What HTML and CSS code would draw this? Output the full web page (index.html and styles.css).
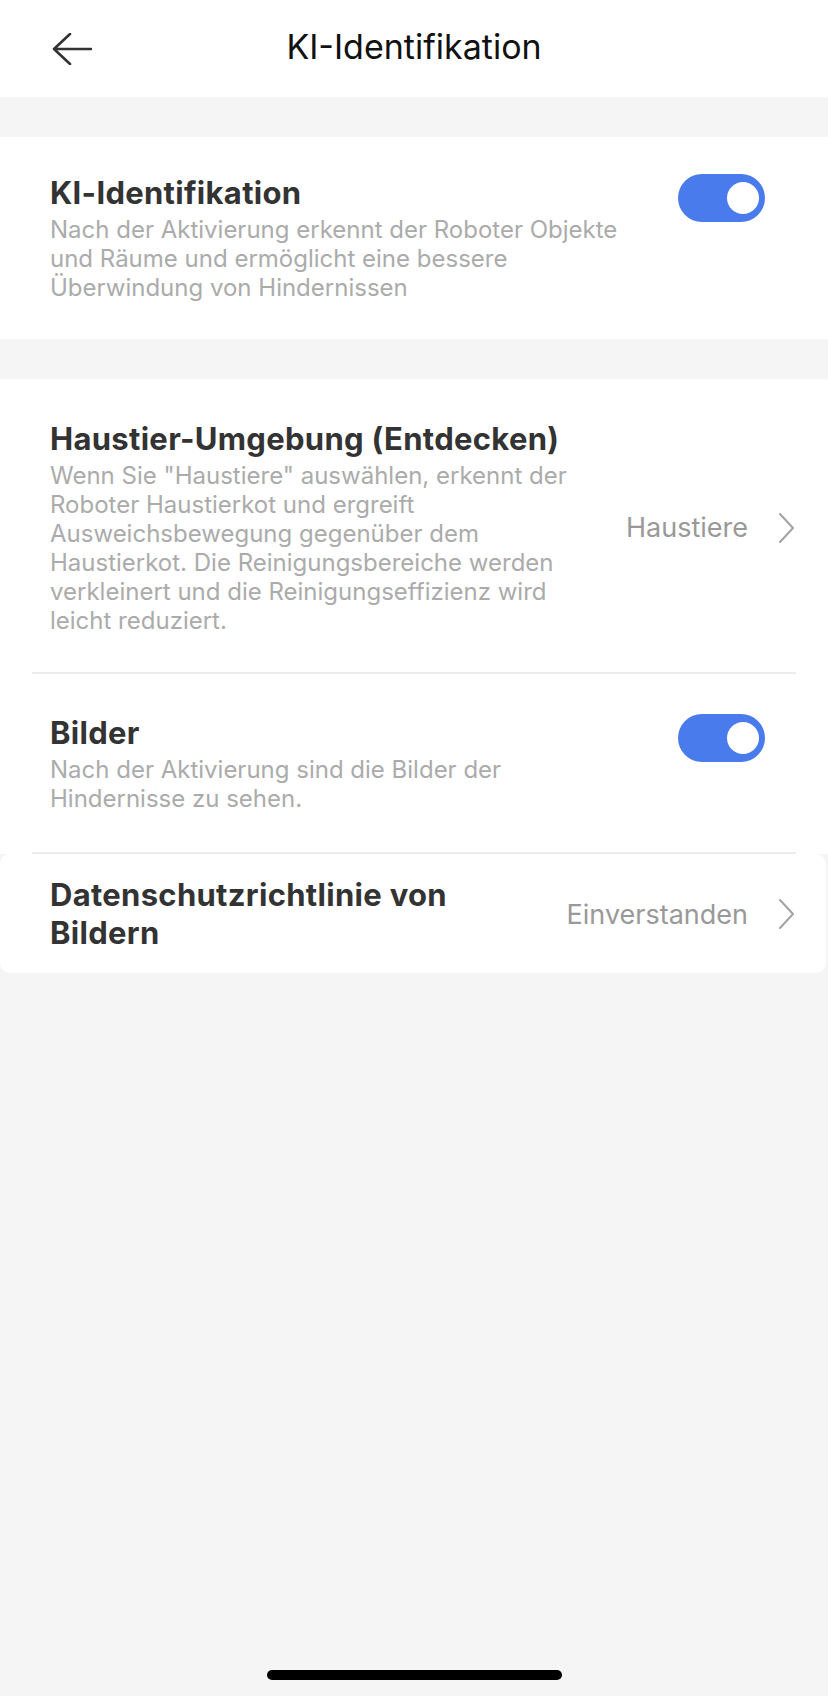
FILE: index.html
```html
<!DOCTYPE html>
<html lang="de">
<head>
    <meta charset="UTF-8">
    <title>KI-Identifikation</title>
    <link rel="stylesheet" href="styles.css">
</head>
<body>
<div class="screen">

<header class="topbar">
    <button class="back" aria-label="Zurück">
        <svg width="40" height="32" viewBox="0 0 40 32">
            <path d="M18 1 L2 16 L18 31 M2 16 H39" fill="none" stroke="#333" stroke-width="2.6" stroke-linecap="round" stroke-linejoin="round"/>
        </svg>
    </button>
    <h1 class="page-title">KI-Identifikation</h1>
    <span></span>
</header>

<section class="card">
    <div class="row row-first">
        <div class="row-text">
            <div class="row-title">KI-Identifikation</div>
            <p class="row-desc">Nach der Aktivierung erkennt der Roboter Objekte und Räume und ermöglicht eine bessere Überwindung von Hindernissen</p>
        </div>
        <span class="switch on"><span class="knob"></span></span>
    </div>
</section>

<section class="card">
    <div class="row row-link">
        <div class="row-text">
            <div class="row-title">Haustier-Umgebung (Entdecken)</div>
            <p class="row-desc">Wenn Sie "Haustiere" auswählen, erkennt der Roboter Haustierkot und ergreift Ausweichsbewegung gegenüber dem Haustierkot. Die Reinigungsbereiche werden verkleinert und die Reinigungseffizienz wird leicht reduziert.</p>
        </div>
        <span class="value">Haustiere</span>
        <svg class="chevron" width="18" height="32" viewBox="0 0 18 32"><path d="M2 2 L15 16 L2 30" fill="none" stroke="#a3a3a3" stroke-width="2" stroke-linecap="round" stroke-linejoin="round"/></svg>
    </div>
    <div class="divider"></div>
    <div class="row row-bilder">
        <div class="row-text">
            <div class="row-title">Bilder</div>
            <p class="row-desc">Nach der Aktivierung sind die Bilder der Hindernisse zu sehen.</p>
        </div>
        <span class="switch on"><span class="knob"></span></span>
    </div>
    <div class="divider"></div>
    <div class="row row-link row-last">
        <div class="row-text">
            <div class="row-title">Datenschutzrichtlinie von Bildern</div>
        </div>
        <span class="value">Einverstanden</span>
        <svg class="chevron" width="18" height="32" viewBox="0 0 18 32"><path d="M2 2 L15 16 L2 30" fill="none" stroke="#a3a3a3" stroke-width="2" stroke-linecap="round" stroke-linejoin="round"/></svg>
    </div>
</section>

<div class="home-indicator"></div>
</div>
</body>
</html>
```

FILE: styles.css
```css
body {
    margin: 0;
    background: #f5f5f5;
    font-family: Inter, "Noto Sans", sans-serif;
    color: #333;
}
.screen {
    min-height: 1696px;
    display: flex;
    flex-direction: column;
}

.topbar {
    height: 97px;
    background: #fff;
    display: grid;
    grid-template-columns: 1fr auto 1fr;
    align-items: center;
    margin-bottom: 40px;
}
.back {
    background: none;
    border: none;
    padding: 0 0 0 52px;
    justify-self: start;
    display: flex;
    cursor: pointer;
}
.page-title {
    margin: 0;
    font-size: 34px;
    font-weight: 400;
    color: #111;
    padding-bottom: 4px;
}

.card { margin-bottom: 40px; }
.row {
    display: flex;
    align-items: flex-start;
    gap: 36px;
    background: #fff;
    padding: 37px 63px 37px 50px;
}
.row-text { flex: 1; }
.row-title {
    font-size: 31px;
    line-height: 38px;
    font-weight: 700;
    letter-spacing: 0.3px;
    color: #333;
}
.row-desc {
    margin: 3px 0 0;
    font-size: 24px;
    line-height: 29px;
    color: #ababab;
}
.row-link {
    align-items: center;
    padding: 41px 32px 37px 50px;
    gap: 0;
}
.row-link .row-text { margin-right: 36px; }
.row-bilder { padding: 40px 63px 39px 50px; }
.row-last {
    margin: 0 2px 0 0;
    padding: 22px 30px 21px 50px;
    border-radius: 10px;
}
.value {
    font-size: 27px;
    color: #999;
    margin-right: 30px;
}
.chevron { flex-shrink: 0; }

.divider {
    background: #fff;
    padding: 0 32px;
}
.divider::before {
    content: "";
    display: block;
    height: 2px;
    background: #ececec;
}

.switch {
    flex-shrink: 0;
    width: 87px;
    height: 48px;
    border-radius: 24px;
    background: #ccc;
    display: flex;
    align-items: center;
    box-sizing: border-box;
    padding: 0 6px;
}
.switch.on {
    background: #4a7bed;
    justify-content: flex-end;
}
.knob {
    width: 32px;
    height: 32px;
    border-radius: 50%;
    background: #fff;
}

.home-indicator {
    margin: auto auto 16px;
    width: 295px;
    height: 10px;
    border-radius: 5px;
    background: #000;
}
```
